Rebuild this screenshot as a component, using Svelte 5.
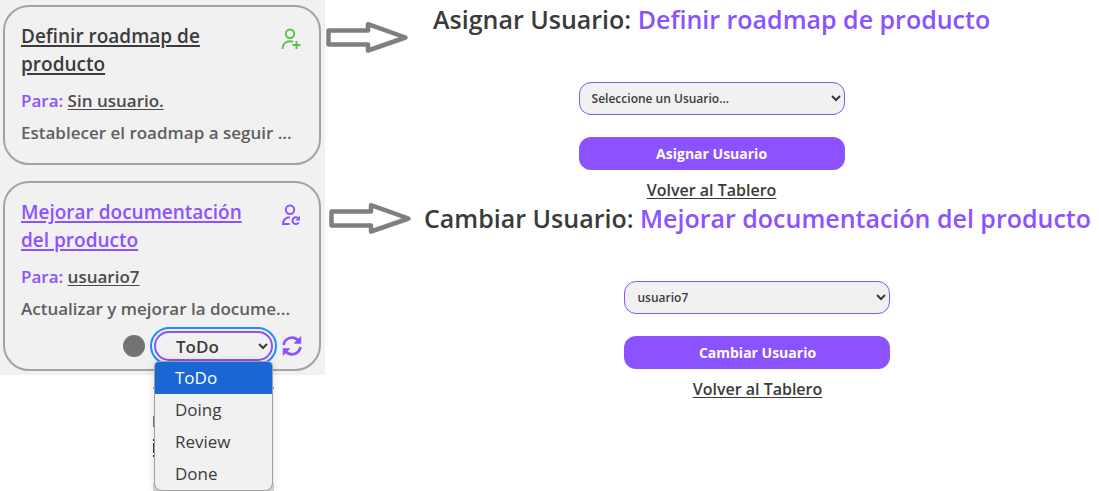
<script>
  const tasks = [
    {
      title: 'Definir roadmap de producto',
      user: 'Sin usuario.',
      summary: 'Establecer el roadmap a seguir ...',
      assigned: false
    },
    {
      title: 'Mejorar documentación del producto',
      user: 'usuario7',
      summary: 'Actualizar y mejorar la docume...',
      assigned: true
    }
  ];
  const panels = [
    { action: 'Asignar Usuario', task: tasks[0].title, option: 'Seleccione un Usuario...' },
    { action: 'Cambiar Usuario', task: tasks[1].title, option: 'usuario7' }
  ];
  const states = ['ToDo', 'Doing', 'Review', 'Done'];
  let status = $state('ToDo');
</script>

<div class="page">
  <section class="board">
    {#each tasks as task}
      <article class="card" class:assigned={task.assigned}>
        <header>
          <h2><a href="#tarea">{task.title}</a></h2>
          <button class="icon" aria-label={task.assigned ? 'Cambiar usuario' : 'Asignar usuario'}>
            <svg viewBox="0 0 24 24" width="24" height="24" fill="none" stroke="currentColor" stroke-width="2">
              <circle cx="11" cy="6.8" r="4.2" />
              {#if task.assigned}
                <path d="M11 14.3C6.8 14.3 4.4 17 4 21H10.5" />
                <path d="M19.6 15.6A3.4 3.4 0 1 0 19.8 19.4" />
                <path d="M21 12.8V17.4H16.4Z" fill="currentColor" stroke="none" />
              {:else}
                <path d="M3.5 22C3.5 17 7 14.3 11 14.3C12.3 14.3 13.2 14.5 14 14.9M17.5 14V22M13.5 18H21.5" />
              {/if}
            </svg>
          </button>
        </header>
        <p class="owner"><span>Para:</span> <a href="#usuario">{task.user}</a></p>
        <p class="summary">{task.summary}</p>
        {#if task.assigned}
          <footer>
            <span class="dot"></span>
            <div class="picker">
              <select class="status" aria-label="Estado" bind:value={status}>
                {#each states as name}<option>{name}</option>{/each}
              </select>
              <div class="drop">
                <ul role="listbox" aria-label="Estados">
                  {#each states as name}
                    <li role="option" aria-selected={name === status} class:selected={name === status}>{name}</li>
                  {/each}
                </ul>
              </div>
            </div>
            <button class="icon" aria-label="Actualizar estado">
              <svg viewBox="0 0 24 24" width="24" height="24" fill="none" stroke="currentColor" stroke-width="2.7">
                <path d="M3.6 11A8.5 8.5 0 0 1 18.6 6.8M20.4 13A8.5 8.5 0 0 1 5.4 17.2" />
                <path d="M20.8 2.8V9.2H14.4ZM3.2 21.2V14.8H9.6Z" fill="currentColor" stroke-width="1" stroke-linejoin="round" />
              </svg>
            </button>
          </footer>
        {/if}
      </article>
    {/each}
  </section>

  <main>
    {#each panels as panel, i}
      <section class="row">
        <svg class="arrow" viewBox="0 0 84 34" width="84" height="34" fill="none" stroke="#7f7f7f" stroke-width="4.5" stroke-linejoin="round">
          <path d="M3.5 10.5H43V4.2L80.5 17.5L43 30.5V24.5H3.5Z" />
        </svg>
        <form class="panel" onsubmit={(e) => e.preventDefault()}>
          <h1>{panel.action}: <em>{panel.task}</em></h1>
          <select class="user" aria-label="Usuario" id={`usuario-${i}`}>
            <option>{panel.option}</option>
          </select>
          <button class="submit">{panel.action}</button>
          <a class="back" href="#tablero">Volver al Tablero</a>
        </form>
      </section>
    {/each}
  </main>
</div>

<style>
  :global(body) {
    margin: 0;
    background: #fff;
  }
  .page {
    display: grid;
    grid-template-columns: 325px 1fr;
    align-items: start;
    min-height: 100vh;
    font-family: 'Open Sans', 'Noto Sans', sans-serif;
    font-weight: 600;
    color: #3b3b3b;
  }
  h1, h2, p, ul {
    margin: 0;
    padding: 0;
    font-weight: inherit;
  }
  select, button {
    font: inherit;
    color: inherit;
    box-sizing: border-box;
  }
  a {
    color: inherit;
    text-underline-offset: 2px;
  }
  .board {
    display: flex;
    flex-direction: column;
    gap: 16px;
    padding: 5px 4px 4px 3px;
    background: #f1f1f1;
  }
  .card {
    border: 2px solid #a3a3a3;
    border-radius: 26px;
    padding: 15px 16px 18px;
  }
  .card.assigned {
    padding-bottom: 8px;
  }
  header {
    display: flex;
    justify-content: space-between;
    align-items: flex-start;
  }
  h2 {
    max-width: 232px;
    font-size: 19px;
    line-height: 28px;
  }
  h2 a {
    text-decoration-thickness: 2px;
  }
  .assigned h2, .assigned .icon {
    color: #8c52ff;
  }
  .icon {
    display: flex;
    padding: 0;
    border: 0;
    background: none;
    color: #62bd46;
  }
  header .icon {
    margin-top: 5px;
  }
  .owner, .summary {
    font-size: 17px;
    line-height: 24px;
    white-space: nowrap;
  }
  .owner {
    margin: 11px 0 8px;
    color: #4b4b4b;
  }
  .owner span {
    color: #8c52ff;
  }
  .summary {
    color: #5f5f5f;
  }
  footer {
    display: flex;
    justify-content: flex-end;
    align-items: center;
    gap: 7px;
    margin: 10px -1px 0 0;
  }
  .dot {
    width: 22px;
    height: 22px;
    margin-right: 2px;
    border-radius: 50%;
    background: #737373;
  }
  .picker {
    position: relative;
    width: 119px;
  }
  .status {
    display: block;
    width: 100%;
    height: 30px;
    padding: 0 0 0 16px;
    border: 2px solid #8c52ff;
    border-radius: 15px;
    outline: 2px solid #1e8cff;
    outline-offset: 2px;
    background: #f1f1f1;
    font-size: 17px;
  }
  .drop {
    position: absolute;
    top: 30px;
    left: -1px;
    right: -1px;
    z-index: 1;
    background: linear-gradient(#a3a3a3, #a3a3a3) 0 26px / 100% 2px no-repeat,
      linear-gradient(#777, #777) 0 55px / 1px 11px no-repeat,
      linear-gradient(#3b3b3b, #3b3b3b) 0 78px / 2px 2px no-repeat,
      linear-gradient(#3b3b3b, #3b3b3b) 0 82px / 2px 10px no-repeat,
      linear-gradient(#3b3b3b, #3b3b3b) 0 94px / 2px 2px no-repeat,
      linear-gradient(#d5d5d5, #d5d5d5) 0 100% / 100% 8px no-repeat;
  }
  ul {
    margin: 0 1px;
    border: 1px solid #a0a0a0;
    border-radius: 5px 5px 8px 8px;
    overflow: hidden;
    list-style: none;
    background: #f1f1f1;
    box-shadow: 0 0 8px #0002;
    font-size: 17px;
    font-weight: 400;
    line-height: 32px;
  }
  li {
    padding-left: 20px;
  }
  li.selected {
    background: #1967d2;
    color: #fff;
  }
  main {
    display: flex;
    flex-direction: column;
    align-items: flex-start;
  }
  .row {
    display: flex;
    align-items: flex-start;
    gap: 24px;
  }
  .row + .row {
    gap: 12px;
    padding-left: 3px;
  }
  .arrow {
    flex: none;
    margin-top: 20px;
  }
  .row + .row .arrow {
    margin-top: 2px;
  }
  .panel {
    display: flex;
    flex-direction: column;
    align-items: center;
  }
  h1 {
    font-size: 25px;
    line-height: 38px;
    white-space: nowrap;
  }
  em {
    font-style: normal;
    color: #8c52ff;
  }
  .user, .submit {
    width: 266px;
    height: 33px;
    border-radius: 12px;
  }
  .user {
    margin: 44px 0 22px;
    padding: 0 0 0 8px;
    border: 1px solid #8c52ff;
    background: #f1f1f1;
    font-size: 12px;
  }
  .submit {
    border: 0;
    background: #8c52ff;
    color: #fff;
    font-size: 14px;
    font-weight: 700;
  }
  .back {
    margin-top: 11px;
    font-size: 16px;
    line-height: 18px;
  }
</style>
